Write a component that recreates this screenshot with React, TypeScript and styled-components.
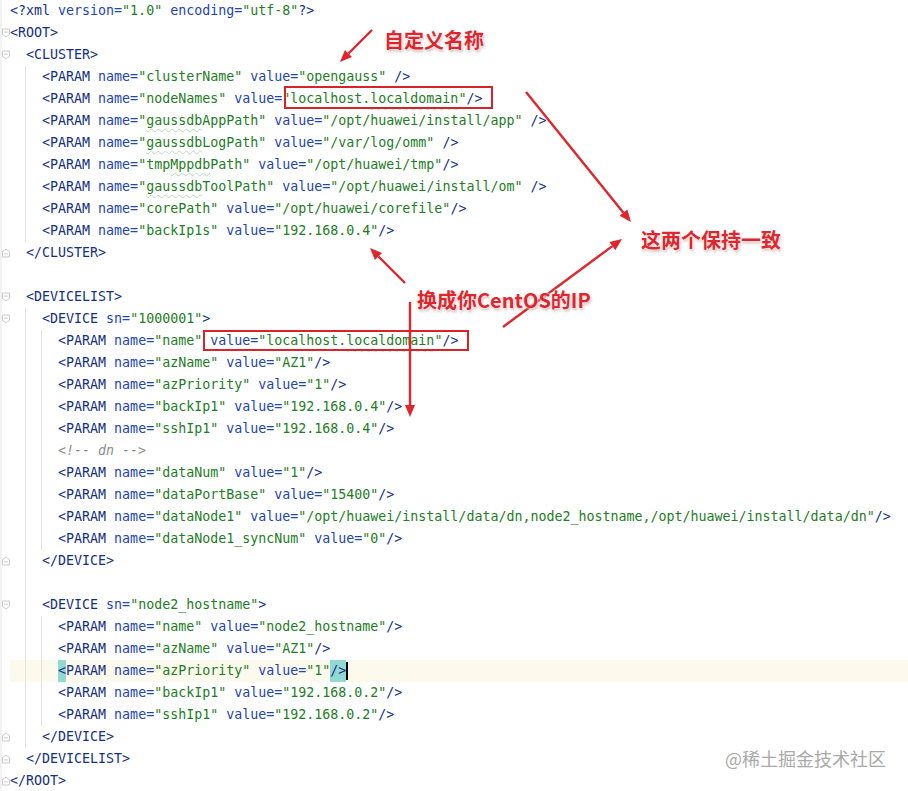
import React from 'react'
import styled, { createGlobalStyle, css } from 'styled-components'

const GlobalStyle = createGlobalStyle`
  html, body {
    margin: 0;
    padding: 0;
    background: #ffffff;
  }
  body {
    width: 908px;
    height: 791px;
    overflow: hidden;
  }
`

type Fold = 'open' | 'close' | undefined

type Row = {
  text: string
  guides: number[]
  fold?: Fold
  current?: boolean
}

const rows: Row[] = [
  { text: '<?xml version="1.0" encoding="utf-8"?>', guides: [] },
  { text: '<ROOT>', guides: [], fold: 'open' },
  { text: '  <CLUSTER>', guides: [], fold: 'open' },
  { text: '    <PARAM name="clusterName" value="opengauss" />', guides: [1] },
  { text: '    <PARAM name="nodeNames" value="localhost.localdomain"/>', guides: [1] },
  { text: '    <PARAM name="gaussdbAppPath" value="/opt/huawei/install/app" />', guides: [1] },
  { text: '    <PARAM name="gaussdbLogPath" value="/var/log/omm" />', guides: [1] },
  { text: '    <PARAM name="tmpMppdbPath" value="/opt/huawei/tmp"/>', guides: [1] },
  { text: '    <PARAM name="gaussdbToolPath" value="/opt/huawei/install/om" />', guides: [1] },
  { text: '    <PARAM name="corePath" value="/opt/huawei/corefile"/>', guides: [1] },
  { text: '    <PARAM name="backIp1s" value="192.168.0.4"/>', guides: [1] },
  { text: '  </CLUSTER>', guides: [], fold: 'close' },
  { text: '', guides: [] },
  { text: '  <DEVICELIST>', guides: [], fold: 'open' },
  { text: '    <DEVICE sn="1000001">', guides: [1], fold: 'open' },
  { text: '      <PARAM name="name" value="localhost.localdomain"/>', guides: [1, 2] },
  { text: '      <PARAM name="azName" value="AZ1"/>', guides: [1, 2] },
  { text: '      <PARAM name="azPriority" value="1"/>', guides: [1, 2] },
  { text: '      <PARAM name="backIp1" value="192.168.0.4"/>', guides: [1, 2] },
  { text: '      <PARAM name="sshIp1" value="192.168.0.4"/>', guides: [1, 2] },
  { text: '      <!-- dn -->', guides: [1, 2] },
  { text: '      <PARAM name="dataNum" value="1"/>', guides: [1, 2] },
  { text: '      <PARAM name="dataPortBase" value="15400"/>', guides: [1, 2] },
  { text: '      <PARAM name="dataNode1" value="/opt/huawei/install/data/dn,node2_hostname,/opt/huawei/install/data/dn"/>', guides: [1, 2] },
  { text: '      <PARAM name="dataNode1_syncNum" value="0"/>', guides: [1, 2] },
  { text: '    </DEVICE>', guides: [1], fold: 'close' },
  { text: '', guides: [1] },
  { text: '    <DEVICE sn="node2_hostname">', guides: [1], fold: 'open' },
  { text: '      <PARAM name="name" value="node2_hostname"/>', guides: [1, 2] },
  { text: '      <PARAM name="azName" value="AZ1"/>', guides: [1, 2] },
  { text: '      <PARAM name="azPriority" value="1"/>', guides: [1, 2], current: true },
  { text: '      <PARAM name="backIp1" value="192.168.0.2"/>', guides: [1, 2] },
  { text: '      <PARAM name="sshIp1" value="192.168.0.2"/>', guides: [1, 2] },
  { text: '    </DEVICE>', guides: [1], fold: 'close' },
  { text: '  </DEVICELIST>', guides: [], fold: 'close' },
  { text: '</ROOT>', guides: [], fold: 'close' },
]

type Kind = 'punct' | 'tag' | 'attr' | 'val' | 'comment' | 'space'
type Token = { kind: Kind; text: string }

function tokenize(line: string): Token[] {
  const lead = line.match(/^\s*/)?.[0] ?? ''
  const rest = line.slice(lead.length)
  const out: Token[] = lead ? [{ kind: 'space', text: lead }] : []
  if (rest.startsWith('<!--')) {
    out.push({ kind: 'comment', text: rest })
    return out
  }
  const re = /(<\/|<\?|<)(\w+)|(\w+)(=)|("[^"]*")|(\/>|\?>|>)|(\s+)/g
  let m: RegExpExecArray | null
  while ((m = re.exec(rest))) {
    if (m[1]) {
      out.push({ kind: 'punct', text: m[1] })
      out.push({ kind: 'tag', text: m[2] })
    } else if (m[3]) {
      out.push({ kind: 'attr', text: m[3] + m[4] })
    } else if (m[5]) {
      out.push({ kind: 'val', text: m[5] })
    } else if (m[6]) {
      out.push({ kind: 'punct', text: m[6] })
    } else {
      out.push({ kind: 'space', text: m[7] })
    }
  }
  return out
}

const typos = /(gaussdb|Mppdb|localdomain)/

const colors: Record<Kind, string> = {
  punct: '#142f84',
  tag: '#142f84',
  attr: '#2244b8',
  val: '#1e7d26',
  comment: '#8c8c8c',
  space: 'inherit',
}

const Page = styled.div`
  position: relative;
  width: 908px;
  height: 791px;
  overflow: hidden;
  background: #ffffff;
`

const Editor = styled.div`
  display: flex;
  flex-direction: column;
  font-family: 'DejaVu Sans Mono', 'Liberation Mono', monospace;
  font-size: 13.3px;
`

const Line = styled.div`
  display: flex;
  height: 22px;
`

const Gutter = styled.div`
  width: 10px;
  flex: none;
  display: flex;
  align-items: center;
  justify-content: flex-start;
  border-left: 2px solid #f2f2f2;
  box-sizing: border-box;
`

const guideBg = (guides: number[]) =>
  guides
    .map((g) => `linear-gradient(#e3e3e3, #e3e3e3) no-repeat ${16 * g - 1}px 0 / 1px 100%`)
    .join(', ')

const Code = styled.div<{ $guides: number[]; $current?: boolean }>`
  flex: 1;
  display: flex;
  align-items: center;
  white-space: pre;
  line-height: 22px;
  ${(p) =>
    p.$guides.length > 0 &&
    css`
      background: ${guideBg(p.$guides)};
    `}
  ${(p) =>
    p.$current &&
    css`
      background-color: #fcfaed;
    `}
`

const Tok = styled.span<{ $kind: Kind; $match?: boolean }>`
  color: ${(p) => colors[p.$kind]};
  font-style: ${(p) => (p.$kind === 'comment' ? 'italic' : 'normal')};
  ${(p) =>
    p.$match &&
    css`
      background: #93d9d3;
    `}
`

const Typo = styled.span`
  text-decoration: underline wavy #b9dcb9;
  text-decoration-thickness: 1px;
  text-underline-offset: 3px;
  text-decoration-skip-ink: none;
`

const Caret = styled.span`
  display: inline-block;
  width: 2px;
  height: 18px;
  background: #000;
`

const Overlay = styled.svg`
  position: absolute;
  left: 0;
  top: 0;
  pointer-events: none;
`

const MarkBox = styled.div<{ $x: number; $y: number; $w: number; $h: number }>`
  position: absolute;
  left: ${(p) => p.$x}px;
  top: ${(p) => p.$y}px;
  width: ${(p) => p.$w}px;
  height: ${(p) => p.$h}px;
  border: 2px solid #d8232b;
  box-sizing: border-box;
`

const Note = styled.div<{ $x: number; $y: number; $size: number }>`
  position: absolute;
  left: ${(p) => p.$x}px;
  top: ${(p) => p.$y}px;
  font-family: 'Noto Sans CJK SC', 'Noto Sans', sans-serif;
  font-weight: 700;
  font-size: ${(p) => p.$size}px;
  line-height: 24px;
  color: #e0252d;
  white-space: nowrap;
  text-shadow: 0 0 2px #fff, 0 0 3px #fff, 1px 2px 3px rgba(120, 0, 0, 0.35);
`

const Watermark = styled.div`
  position: absolute;
  left: 725px;
  top: 746px;
  font-family: 'Noto Sans CJK SC', 'Noto Sans', sans-serif;
  font-size: 18px;
  line-height: 24px;
  color: #a9a9a9;
  white-space: nowrap;
  text-shadow: 0 0 1px #fff;
`

function FoldMark({ kind }: { kind: Fold }) {
  if (!kind) return null
  const d = kind === 'open' ? 'M0.5 1.5 H8.5 V7.5 L4.5 10.5 L0.5 7.5 Z' : 'M0.5 10.5 H8.5 V4.5 L4.5 1.5 L0.5 4.5 Z'
  return (
    <svg width="9" height="12" viewBox="0 0 9 12">
      <path d={d} fill="#fff" stroke="#c2c2c2" strokeWidth="1" />
      <path d={kind === 'open' ? 'M2.5 5 H6.5' : 'M2.5 7 H6.5'} stroke="#c2c2c2" strokeWidth="1" />
    </svg>
  )
}

function renderTokens(row: Row) {
  const toks = tokenize(row.text)
  const last = toks.length - 1
  return toks.map((t, i) => {
    const match = row.current && t.kind === 'punct' && (i === 1 || i === last)
    const parts = t.kind === 'val' || t.kind === 'attr' ? t.text.split(typos) : [t.text]
    return (
      <Tok key={i} $kind={t.kind} $match={match}>
        {parts.map((part, j) => (typos.test(part) ? <Typo key={j}>{part}</Typo> : part))}
      </Tok>
    )
  })
}

type Arrow = { x1: number; y1: number; x2: number; y2: number }

const arrows: Arrow[] = [
  { x1: 372, y1: 30, x2: 340, y2: 62 },
  { x1: 526, y1: 92, x2: 631, y2: 222 },
  { x1: 503, y1: 327, x2: 622, y2: 239 },
  { x1: 405, y1: 283, x2: 370, y2: 248 },
  { x1: 410, y1: 302, x2: 410, y2: 417 },
]

function ArrowLine({ a }: { a: Arrow }) {
  const ang = Math.atan2(a.y2 - a.y1, a.x2 - a.x1)
  const len = 12
  const wid = 5
  const bx = a.x2 - Math.cos(ang) * len
  const by = a.y2 - Math.sin(ang) * len
  const px = -Math.sin(ang) * wid
  const py = Math.cos(ang) * wid
  return (
    <g>
      <line x1={a.x1} y1={a.y1} x2={bx} y2={by} stroke="#e0252d" strokeWidth="2.4" />
      <polygon points={`${a.x2},${a.y2} ${bx + px},${by + py} ${bx - px},${by - py}`} fill="#e0252d" />
    </g>
  )
}

export default function App() {
  return (
    <Page>
      <GlobalStyle />
      <Editor>
        {rows.map((row, i) => (
          <Line key={i}>
            <Gutter>
              <FoldMark kind={row.fold} />
            </Gutter>
            <Code $guides={row.guides} $current={row.current}>
              {renderTokens(row)}
              {row.current && <Caret />}
            </Code>
          </Line>
        ))}
      </Editor>

      <MarkBox $x={284} $y={86} $w={209} $h={23} />
      <MarkBox $x={203} $y={330} $w={266} $h={21} />

      <Overlay width="908" height="791">
        {arrows.map((a, i) => (
          <ArrowLine key={i} a={a} />
        ))}
      </Overlay>

      <Note $x={384} $y={28} $size={20}>自定义名称</Note>
      <Note $x={641} $y={228} $size={20}>这两个保持一致</Note>
      <Note $x={417} $y={288} $size={20}>换成你CentOS的IP</Note>

      <Watermark>@稀土掘金技术社区</Watermark>
    </Page>
  )
}
